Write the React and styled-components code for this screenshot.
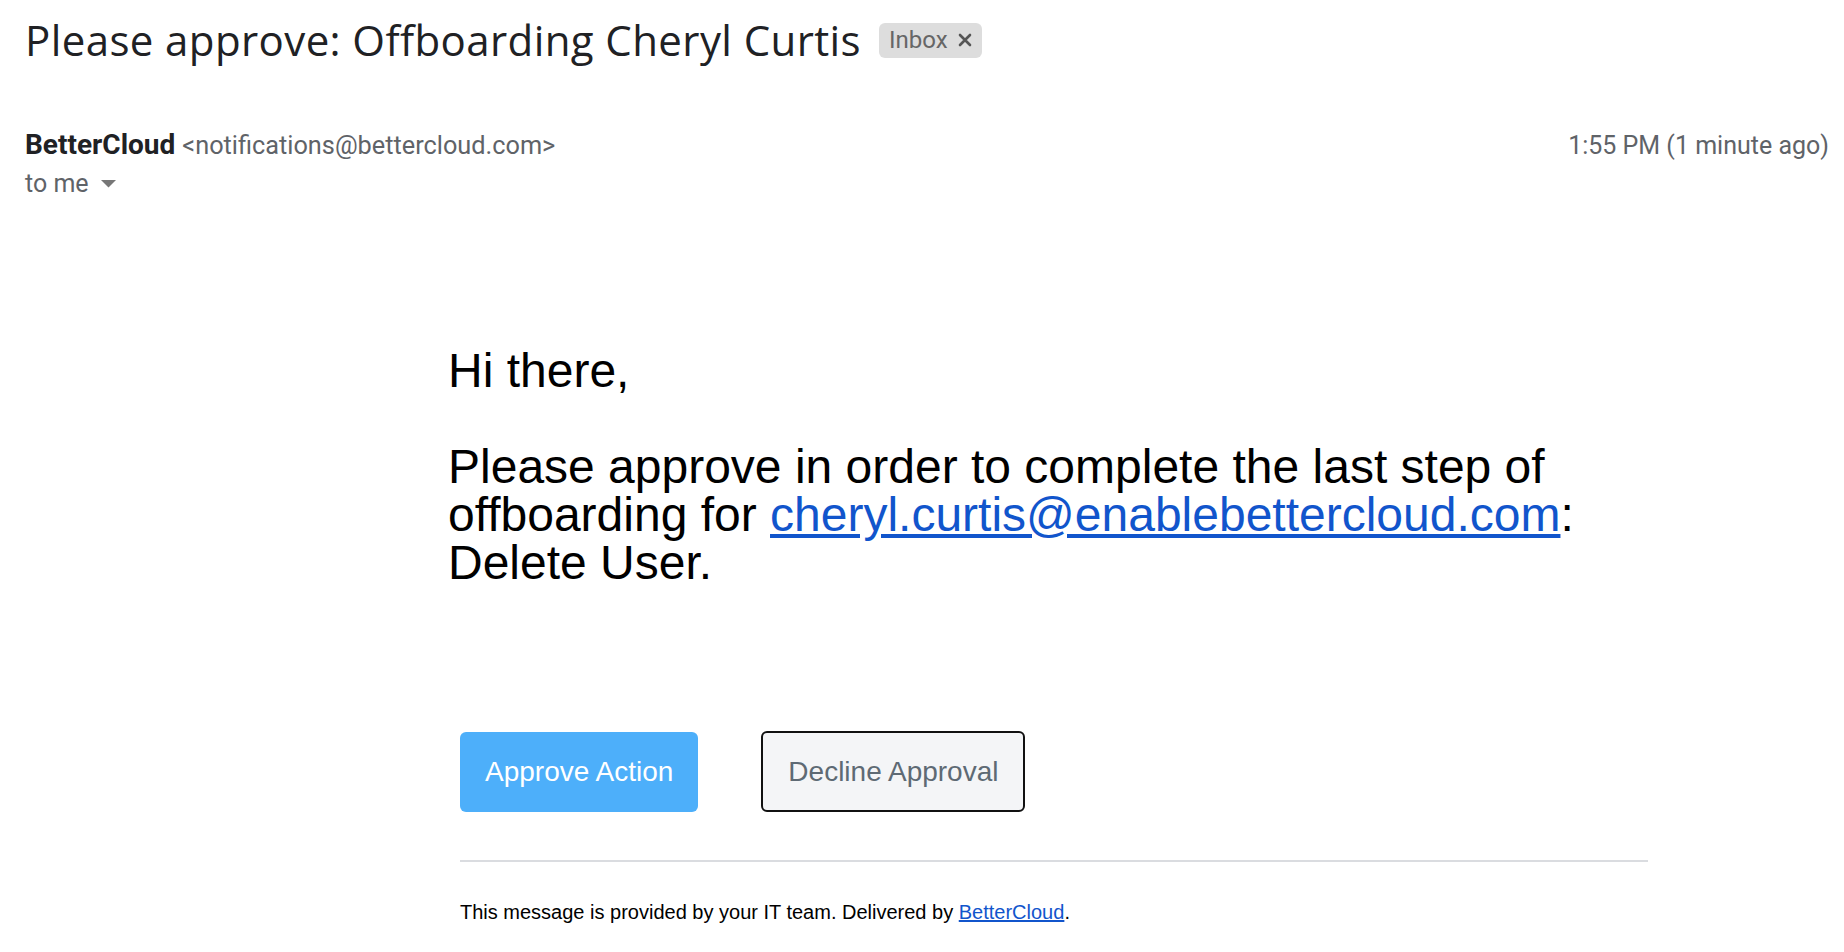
import React from "react";
import styled, { createGlobalStyle } from "styled-components";

const GlobalStyle = createGlobalStyle`
  body {
    margin: 0;
    background: #ffffff;
  }
`;

const Page = styled.div`
  padding: 0 15px 0 25px;
  font-family: Roboto, "Liberation Sans", Arial, sans-serif;
`;

const SubjectRow = styled.div`
  display: flex;
  align-items: center;
  gap: 18px;
  height: 78px;
`;

const Subject = styled.h1`
  margin: 0;
  font-family: "Open Sans", Roboto, sans-serif;
  font-size: 42px;
  font-weight: 400;
  letter-spacing: 0.4px;
  color: #202124;
`;

const Chip = styled.span`
  display: inline-flex;
  align-items: center;
  gap: 10px;
  height: 35px;
  padding: 0 10px 0 10px;
  margin-top: 2px;
  border-radius: 6px;
  background: #dddddd;
  color: #666666;
  font-size: 24px;
`;

const HeaderRow = styled.div`
  display: flex;
  justify-content: space-between;
  align-items: flex-start;
  margin-top: 50px;
`;

const SenderBlock = styled.div`
  display: flex;
  flex-direction: column;
  gap: 8px;
`;

const SenderLine = styled.div`
  display: flex;
  align-items: baseline;
  gap: 7px;
`;

const SenderName = styled.span`
  font-size: 28px;
  font-weight: 700;
  color: #202124;
`;

const SenderAddress = styled.span`
  font-size: 25.3px;
  color: #5f6368;
`;

const Recipient = styled.div`
  display: flex;
  align-items: center;
  gap: 12px;
  font-size: 25px;
  color: #5f6368;
`;

const Timestamp = styled.span`
  font-size: 25px;
  color: #5f6368;
  padding-top: 3px;
`;

const Body = styled.div`
  margin-left: 423px;
  padding-top: 149px;
  font-family: "Liberation Sans", Arial, Helvetica, sans-serif;
  color: #000000;
`;

const Message = styled.p`
  margin: 0;
  font-size: 48px;
  line-height: 48px;
`;

const MailLink = styled.a`
  color: #1155cc;
  text-decoration: underline;
`;

const Actions = styled.div`
  display: flex;
  align-items: center;
  gap: 63px;
  margin: 144px 0 0 12px;
`;

const ActionButton = styled.a`
  display: inline-flex;
  align-items: center;
  justify-content: center;
  box-sizing: border-box;
  height: ${({ $primary }) => ($primary ? "80px" : "81px")};
  padding: 0 25px;
  border-radius: 6px;
  font-size: 28px;
  text-decoration: none;
  background: ${({ $primary }) => ($primary ? "#4daffa" : "#f4f5f7")};
  color: ${({ $primary }) => ($primary ? "#ffffff" : "#5e6a74")};
  border: ${({ $primary }) => ($primary ? "none" : "2px solid #111111")};
`;

const Divider = styled.hr`
  width: 1188px;
  margin: 48px 0 0 12px;
  border: none;
  border-top: 2px solid #dadce0;
`;

const Footer = styled.p`
  margin: 39px 0 0 12px;
  font-size: 20px;
  color: #000000;
`;

const FooterLink = styled.a`
  color: #1155cc;
  text-decoration: underline;
`;

const CloseIcon = () => (
  <svg width="14" height="14" viewBox="0 0 14 14">
    <path d="M2 2 L12 12 M12 2 L2 12" stroke="#555555" strokeWidth="2.6" strokeLinecap="round" />
  </svg>
);

const Caret = () => (
  <svg width="15" height="8" viewBox="0 0 15 8">
    <path d="M0 0 H15 L7.5 7.5 Z" fill="#777777" />
  </svg>
);

export default function App() {
  return (
    <>
      <GlobalStyle />
      <Page>
        <SubjectRow>
          <Subject>Please approve: Offboarding Cheryl Curtis</Subject>
          <Chip>
            Inbox
            <CloseIcon />
          </Chip>
        </SubjectRow>
        <HeaderRow>
          <SenderBlock>
            <SenderLine>
              <SenderName>BetterCloud</SenderName>
              <SenderAddress>&lt;notifications@bettercloud.com&gt;</SenderAddress>
            </SenderLine>
            <Recipient>
              to me
              <Caret />
            </Recipient>
          </SenderBlock>
          <Timestamp>1:55 PM (1 minute ago)</Timestamp>
        </HeaderRow>
        <Body>
          <Message>
            Hi there,
            <br />
            <br />
            Please approve in order to complete the last step of
            <br />
            offboarding for{" "}
            <MailLink href="#">cheryl.curtis@enablebettercloud.com</MailLink>:
            <br />
            Delete User.
          </Message>
          <Actions>
            <ActionButton $primary href="#">Approve Action</ActionButton>
            <ActionButton href="#">Decline Approval</ActionButton>
          </Actions>
          <Divider />
          <Footer>
            This message is provided by your IT team. Delivered by{" "}
            <FooterLink href="#">BetterCloud</FooterLink>.
          </Footer>
        </Body>
      </Page>
    </>
  );
}
